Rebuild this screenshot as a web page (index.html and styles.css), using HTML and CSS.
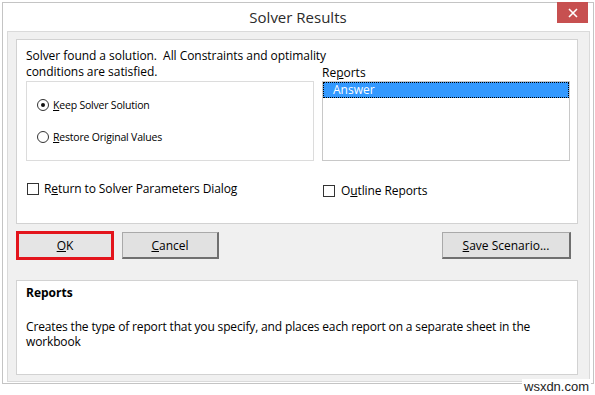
FILE: index.html
```html
<!DOCTYPE html>
<html lang="en">
<head>
    <meta charset="UTF-8">
    <meta name="viewport" content="width=device-width, initial-scale=1.0">
    <title>Solver Results</title>
    <link rel="stylesheet" href="styles.css">
</head>
<body>
    <div class="dialog">
        <div class="titlebar">
            <span class="title">Solver Results</span>
            <div class="close">
                <svg width="10" height="10" viewBox="0 0 10 10">
                    <path d="M1 1 L9 9 M9 1 L1 9" stroke="#fff" stroke-width="1.6" fill="none"/>
                </svg>
            </div>
        </div>

        <div class="client">
            <div class="panel main">
                <div class="msg">
                    <span>Solver found a solution.&nbsp; All Constraints and optimality</span>
                    <span>conditions are satisfied.</span>
                </div>
                <div class="reports-label">Re<u>p</u>orts</div>

                <div class="options">
                    <label class="radio"><span class="dot checked"></span><span><u>K</u>eep Solver Solution</span></label>
                    <label class="radio"><span class="dot"></span><span><u>R</u>estore Original Values</span></label>
                </div>
                <div class="listbox">
                    <div class="item selected">Answer</div>
                </div>

                <label class="check return"><span class="box"></span><span>R<u>e</u>turn to Solver Parameters Dialog</span></label>
                <label class="check outline"><span class="box"></span><span>O<u>u</u>tline Reports</span></label>
            </div>

            <div class="buttons">
                <button class="btn ok"><u>O</u>K</button>
                <button class="btn cancel"><u>C</u>ancel</button>
                <button class="btn save"><u>S</u>ave Scenario...</button>
            </div>

            <div class="panel help">
                <h2>Reports</h2>
                <p>Creates the type of report that you specify, and places each report on a separate sheet in the workbook</p>
            </div>
        </div>
    </div>
    <div class="watermark">wsxdn.com</div>
</body>
</html>
```

FILE: styles.css
```css
body {
    margin: 0;
    background-color: #fff;
    font-family: "Open Sans", "Noto Sans", sans-serif;
    color: #000;
}

.dialog {
    position: relative;
    box-sizing: border-box;
    width: 592px;
    height: 382px;
    margin: 2px 0 0 2px;
    border: 1px solid #c4c4c4;
    background-color: #fff;
    display: flex;
    flex-direction: column;
}

.titlebar {
    height: 28px;
    display: flex;
    align-items: center;
    justify-content: center;
}

.title {
    font-size: 15px;
    color: #2b2b2b;
    margin-top: -1px;
}

.close {
    position: absolute;
    top: -1px;
    right: 5px;
    width: 31px;
    height: 21px;
    background-color: #c75050;
    display: flex;
    align-items: center;
    justify-content: center;
}

.client {
    flex: 1;
    margin: 0 3px 1px 4px;
    padding: 7px 11px 6px 8px;
    border: 1px solid #dadada;
    background-color: #f0f0f0;
    display: flex;
    flex-direction: column;
}

.panel {
    box-sizing: border-box;
    border: 1px solid #d2d2d2;
    background-color: #fff;
}

.main {
    height: 185px;
    padding: 8px 0 0 9px;
    display: grid;
    grid-template-columns: 288px 248px;
    grid-template-rows: auto 80px auto;
    align-content: start;
    column-gap: 8px;
    align-items: start;
}

.msg {
    margin: 0 0 1px 0;
    display: flex;
    flex-direction: column;
    align-items: flex-start;
    font-size: 12px;
    line-height: 16px;
    letter-spacing: -0.05px;
}

.msg span {
    white-space: nowrap;
}

.reports-label {
    align-self: end;
    font-size: 12px;
    line-height: 14px;
    margin-bottom: 1px;
}

.options {
    box-sizing: border-box;
    height: 80px;
    border: 1px solid #dcdcdc;
    padding: 15px 0 0 10px;
    display: flex;
    flex-direction: column;
    gap: 16px;
}

.radio {
    display: flex;
    align-items: center;
    gap: 4px;
    font-size: 10.5px;
    line-height: 16px;
    letter-spacing: -0.2px;
}

.dot {
    box-sizing: border-box;
    width: 12px;
    height: 12px;
    border: 1px solid #333;
    border-radius: 50%;
    background-color: #fff;
    display: flex;
    align-items: center;
    justify-content: center;
}

.dot.checked::after {
    content: "";
    width: 4px;
    height: 4px;
    border-radius: 50%;
    background-color: #111;
}

.listbox {
    box-sizing: border-box;
    height: 80px;
    border: 1px solid #c8c8c8;
}

.item {
    height: 16px;
    font-size: 12px;
    line-height: 14px;
    padding-left: 9px;
    box-sizing: border-box;
}

.item.selected {
    background-color: #3399ff;
    color: #fff;
    border: 1px dotted #000;
}

.check {
    display: flex;
    align-items: center;
    font-size: 12px;
    line-height: 16px;
    letter-spacing: -0.1px;
}

.check.return {
    margin: 20px 0 0 1px;
    gap: 5px;
}

.check.outline {
    margin: 22px 0 0 1px;
    gap: 6px;
}

.box {
    box-sizing: border-box;
    width: 12px;
    height: 12px;
    border: 1px solid #333;
    background-color: #fff;
}

.buttons {
    margin-top: 7px;
    display: flex;
    align-items: center;
    gap: 8px;
}

.btn {
    box-sizing: border-box;
    height: 27px;
    padding: 0;
    font-family: inherit;
    font-size: 12px;
    color: #000;
    background-color: #e1e1e1;
    border: 1px solid #a9a9a9;
    border-right: 2px solid #6f6f6f;
    border-bottom: 2px solid #6f6f6f;
}

.btn.ok {
    width: 98px;
    height: 29px;
    border: 3px solid #e3141c;
    background-color: #e5e5e5;
}

.btn.cancel {
    width: 97px;
}

.btn.save {
    width: 129px;
    margin-left: auto;
    margin-right: 7px;
}

.help {
    margin-top: 20px;
    height: 95px;
    padding: 4px 0 0 9px;
}

.help h2 {
    margin: 0;
    font-size: 12px;
    line-height: 16px;
    font-weight: bold;
}

.help p {
    margin: 18px 0 0 0;
    font-size: 12px;
    line-height: 15px;
    letter-spacing: -0.15px;
    width: 520px;
}

.watermark {
    position: absolute;
    left: 522px;
    top: 379px;
    font-family: "Liberation Sans", Arial, sans-serif;
    font-size: 13px;
    color: #222;
    background-color: #fff;
    padding: 0 2px;
}
```
